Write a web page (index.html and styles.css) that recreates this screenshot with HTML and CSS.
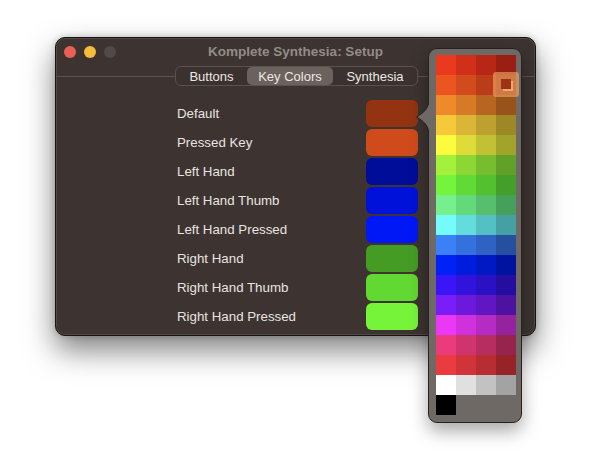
FILE: index.html
```html
<!DOCTYPE html>
<html>
<head>
<meta charset="utf-8">
<title>Komplete Synthesia: Setup</title>
<link rel="stylesheet" href="styles.css">
</head>
<body>
<div class="window">
  <div class="titlebar">
    <div class="lights">
      <span class="light red"></span>
      <span class="light yellow"></span>
      <span class="light gray"></span>
    </div>
    <div class="title">Komplete Synthesia: Setup</div>
    <div></div>
  </div>
  <div class="tabs-wrap">
    <div class="tabs">
      <div class="tab t1">Buttons</div>
      <div class="tab t2 selected">Key Colors</div>
      <div class="tab t3">Synthesia</div>
    </div>
  </div>
  <div class="rows">
    <div class="label">Default</div><div class="swatch" style="background:#933312"></div>
    <div class="label">Pressed Key</div><div class="swatch" style="background:#d04b1b"></div>
    <div class="label">Left Hand</div><div class="swatch" style="background:#000d98"></div>
    <div class="label">Left Hand Thumb</div><div class="swatch" style="background:#0012d9"></div>
    <div class="label">Left Hand Pressed</div><div class="swatch" style="background:#0018f6"></div>
    <div class="label">Right Hand</div><div class="swatch" style="background:#449c25"></div>
    <div class="label">Right Hand Thumb</div><div class="swatch" style="background:#62d832"></div>
    <div class="label">Right Hand Pressed</div><div class="swatch" style="background:#76f43a"></div>
  </div>
</div>

<div class="popup">
  <svg class="arrow" width="13" height="32" viewBox="0 0 13 32">
    <path d="M13 0 C13 8 7 12 0.5 16 C7 20 13 24 13 32 Z" fill="#6e6965"/>
    <path d="M12.5 0 C12.5 8 7 12 0.5 16 C7 20 12.5 24 12.5 32" fill="none" stroke="#26211f" stroke-width="1"/>
  </svg>
  <div class="palette">
    <div style="background:#e93a1f"></div><div style="background:#d02f1a"></div><div style="background:#b82616"></div><div style="background:#9a1f12"></div>
    <div style="background:#ea5520"></div><div style="background:#d14b1c"></div><div style="background:#b83d18"></div><div style="background:#9c3314"></div>
    <div style="background:#ef8a2b"></div><div style="background:#d67a26"></div><div style="background:#b86521"></div><div style="background:#98531b"></div>
    <div style="background:#f6c83a"></div><div style="background:#dbb535"></div><div style="background:#bda02f"></div><div style="background:#9d8727"></div>
    <div style="background:#fdfb3e"></div><div style="background:#dfdc39"></div><div style="background:#c1c133"></div><div style="background:#a1a32b"></div>
    <div style="background:#a4f13b"></div><div style="background:#8cd734"></div><div style="background:#77be2f"></div><div style="background:#61a029"></div>
    <div style="background:#74f43b"></div><div style="background:#62da35"></div><div style="background:#53c030"></div><div style="background:#449f2a"></div>
    <div style="background:#75f08c"></div><div style="background:#63d97c"></div><div style="background:#55bf6d"></div><div style="background:#469f5b"></div>
    <div style="background:#74fbfc"></div><div style="background:#63dcdd"></div><div style="background:#55c0c4"></div><div style="background:#45a0a4"></div>
    <div style="background:#3a80f6"></div><div style="background:#3471dc"></div><div style="background:#2e63c3"></div><div style="background:#26509f"></div>
    <div style="background:#0022f6"></div><div style="background:#001ddd"></div><div style="background:#0019c4"></div><div style="background:#0013a0"></div>
    <div style="background:#3a16f6"></div><div style="background:#3213dc"></div><div style="background:#2c10c3"></div><div style="background:#240d9f"></div>
    <div style="background:#7b1df6"></div><div style="background:#6d19dc"></div><div style="background:#6016c3"></div><div style="background:#4e12a0"></div>
    <div style="background:#eb38f6"></div><div style="background:#cf31dc"></div><div style="background:#b52bc3"></div><div style="background:#95239f"></div>
    <div style="background:#ea3b7b"></div><div style="background:#d0346e"></div><div style="background:#b72d60"></div><div style="background:#97244d"></div>
    <div style="background:#ea3b41"></div><div style="background:#d03439"></div><div style="background:#b72d31"></div><div style="background:#972328"></div>
    <div style="background:#ffffff"></div><div style="background:#e0e0e0"></div><div style="background:#c2c2c2"></div><div style="background:#a3a3a3"></div>
    <div style="background:#000000"></div><div></div><div></div><div></div>
  </div>
  <div class="highlight"><div class="chip"></div></div>
</div>
</body>
</html>
```

FILE: styles.css
```css
html, body {
  margin: 0;
  padding: 0;
}

body {
  position: relative;
  width: 592px;
  height: 462px;
  box-sizing: border-box;
  padding: 37px 0 0 55px;
  background: #ffffff;
  font-family: "Liberation Sans", Arial, sans-serif;
  overflow: hidden;
}

.window {
  width: 481px;
  height: 299px;
  box-sizing: border-box;
  background: #3d3431;
  border: 1px solid #181412;
  border-radius: 10px;
  box-shadow: inset 0 0 0 1px rgba(255, 255, 255, 0.1),
              0 14px 30px rgba(0, 0, 0, 0.5),
              0 0 6px rgba(0, 0, 0, 0.2);
}

.titlebar {
  border-bottom: 1px solid #5a524e;
  display: grid;
  grid-template-columns: 1fr auto 1fr;
  align-items: start;
  padding: 8px 0 0 8px;
  box-sizing: content-box;
  height: 30px;
}

.lights {
  display: flex;
  gap: 8px;
}

.light {
  width: 12px;
  height: 12px;
  border-radius: 50%;
  box-sizing: border-box;
}
.light.red { background: #ec5f57; }
.light.yellow { background: #f4bd3b; }
.light.gray { background: #524a46; }

.title {
  font-weight: bold;
  font-size: 13.5px;
  line-height: 14px;
  color: #928c89;
  margin-top: -1px;
  margin-left: -8px;
}

.tabs-wrap {
  display: flex;
  justify-content: center;
  margin-top: -11px;
  padding-left: 2px;
}

.tabs {
  display: flex;
  height: 20px;
  box-sizing: border-box;
  border: 1px solid #5a524e;
  border-radius: 6px;
  background: #3b322f;
}

.tab {
  font-size: 13px;
  color: #ebe7e4;
  display: flex;
  align-items: center;
  justify-content: center;
  border-radius: 5px;
}
.tab.t1 { width: 71px; }
.tab.t2 { width: 86px; }
.tab.t3 { width: 84px; }
.tab.selected {
  background: #6b625e;
}

.rows {
  margin-top: 14px;
  padding-left: 121px;
  display: grid;
  grid-template-columns: 189px 52px;
  grid-auto-rows: 27px;
  row-gap: 2px;
  align-items: center;
}

.label {
  font-size: 13.3px;
  color: #e8e4e1;
}

.swatch {
  height: 27px;
  border-radius: 6px;
}

.popup {
  position: absolute;
  left: 428px;
  top: 48px;
  width: 94px;
  height: 375px;
  box-sizing: border-box;
  background: #6e6965;
  border: 1px solid #26211f;
  border-radius: 9px;
  padding: 6px 5px 7px 7px;
  box-shadow: 0 8px 18px rgba(0, 0, 0, 0.35);
}

.arrow {
  position: absolute;
  left: -13px;
  top: 52px;
  display: block;
}

.palette {
  display: grid;
  grid-template-columns: repeat(4, 20px);
  grid-auto-rows: 20px;
}

.highlight {
  position: absolute;
  left: 64px;
  top: 23px;
  width: 26px;
  height: 25px;
  border-radius: 3px;
  background: rgba(246, 170, 105, 0.6);
  display: flex;
  align-items: center;
  justify-content: center;
}

.chip {
  width: 10px;
  height: 10px;
  background: #9c3314;
  margin: -1px 0 0 -1px;
  box-shadow: 2px 2px 0 0 rgba(255, 205, 160, 0.55);
}
```
